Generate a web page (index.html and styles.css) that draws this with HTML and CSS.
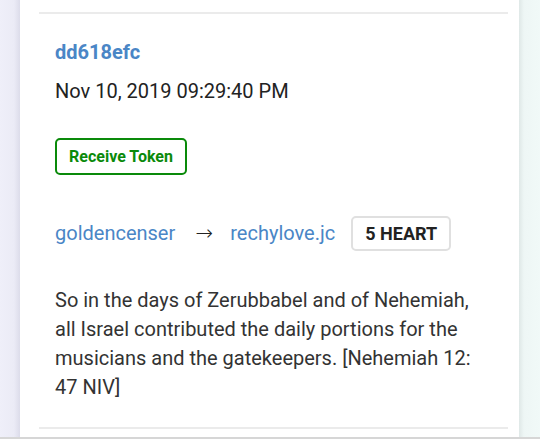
FILE: index.html
```html
<!DOCTYPE html>
<html>
<head>
<meta charset="utf-8">
<link rel="stylesheet" href="styles.css">
</head>
<body>
<div class="page">
  <div class="side side-left"></div>
  <main class="card">
    <section class="item">
      <a class="tx-id">dd618efc</a>
      <div class="tx-date">Nov 10, 2019 09:29:40 PM</div>
      <div class="tx-type"><span class="tag-receive">Receive Token</span></div>
      <div class="tx-flow">
        <a class="account">goldencenser</a>
        <span class="arrow">→</span>
        <a class="account">rechylove.jc</a>
        <span class="amount">5 HEART</span>
      </div>
      <p class="memo">So in the days of Zerubbabel and of Nehemiah, all Israel contributed the daily portions for the musicians and the gatekeepers. [Nehemiah 12: 47 NIV]</p>
    </section>
    <section class="item item-next"></section>
  </main>
  <div class="side side-right"></div>
</div>
</body>
</html>
```
FILE: styles.css
```css
html, body {
  margin: 0;
  padding: 0;
  height: 439px;
  overflow: hidden;
}
body {
  font-family: Roboto, "Liberation Sans", sans-serif;
  color: #222;
}
.page {
  display: flex;
  height: 437px;
  border-bottom: 2px solid #d6d6d6;
}
.side-left {
  width: 20px;
  background: linear-gradient(to right, #efeff9 0, #ebebf6 14px, #dcdcea 20px);
}
.side-right {
  flex: 1;
  background: linear-gradient(to right, #dfe8e7 0, #eef6f5 5px, #f1f9f8 100%);
}
.card {
  width: 499px;
  background: #fff;
  padding-top: 12px;
  box-sizing: border-box;
}
.item {
  margin: 0 11px 0 19px;
  border-top: 2px solid #ebebeb;
  padding: 25px 16px 25px;
}
.item-next {
  padding: 0;
}
.tx-id {
  display: block;
  font-size: 20px;
  line-height: 26px;
  font-weight: 700;
  color: #4a86c6;
}
.tx-date {
  margin-top: 13px;
  font-size: 20px;
  line-height: 26px;
  color: #222;
}
.tx-type {
  margin-top: 34px;
  display: flex;
}
.tag-receive {
  display: inline-flex;
  align-items: center;
  justify-content: center;
  box-sizing: border-box;
  width: 132px;
  height: 37px;
  border: 2px solid #0a8a0a;
  border-radius: 5px;
  color: #0a8a0a;
  font-weight: 700;
  font-size: 16px;
}
.tx-flow {
  margin-top: 41px;
  display: flex;
  align-items: center;
  height: 34px;
  font-size: 20px;
}
.account {
  color: #4a86c6;
}
.arrow {
  display: inline-flex;
  justify-content: center;
  width: 18px;
  margin: 0 17px 0 20px;
  color: #222;
  font-family: "DejaVu Sans", sans-serif;
  font-weight: 200;
  font-size: 21px;
  line-height: 1;
}
.amount {
  margin-left: 16px;
  box-sizing: border-box;
  height: 35px;
  width: 100px;
  display: inline-flex;
  align-items: center;
  justify-content: center;
  border: 2px solid #e0e0e0;
  border-radius: 5px;
  font-weight: 700;
  font-size: 18px;
  color: #222;
}
.memo {
  margin: 36px 0 0;
  font-size: 20px;
  line-height: 29px;
  color: #333;
}
```
